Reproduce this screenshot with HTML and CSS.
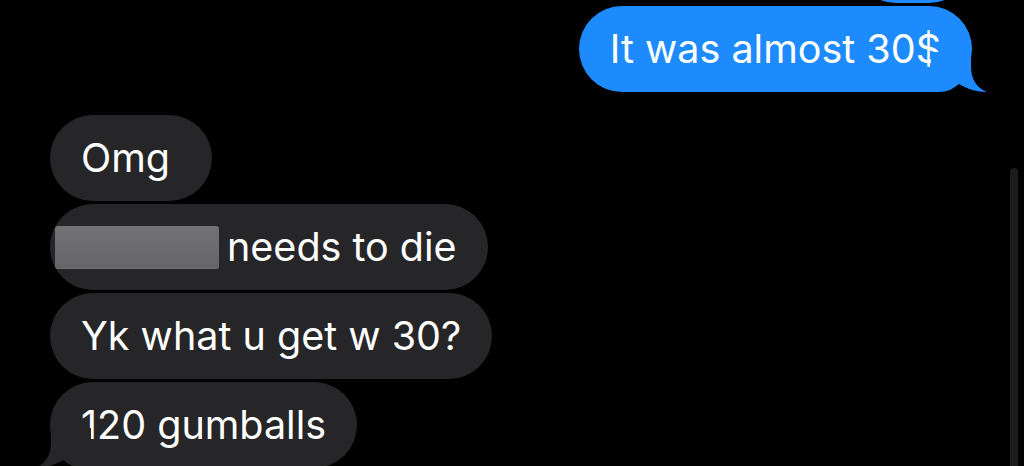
FILE: index.html
```html
<!DOCTYPE html>
<html lang="en">
<head>
<meta charset="utf-8">
<title>Messages</title>
<link rel="stylesheet" href="styles.css">
</head>
<body>
<div class="screen">
  <div class="thread">
    <div class="row row-out">
      <div class="bubble out prev"></div>
    </div>
    <div class="row row-out">
      <div class="bubble out has-tail">It was almost 30$
        <svg class="tail tail-out" viewBox="0 0 56 40" width="56" height="40" aria-hidden="true"><path d="M40 0 L40 14 C40 28 46 36 56 40 C46 40 36 37 28 32 C22 37 16 40 8 40 L0 40 L0 0 Z"/></svg>
      </div>
    </div>
    <div class="group-in">
      <div class="bubble in">Omg</div>
      <div class="bubble in"><span class="redact"></span>needs to die</div>
      <div class="bubble in">Yk what u get w 30?</div>
      <div class="bubble in has-tail">120 gumballs
        <svg class="tail tail-in" viewBox="0 0 56 40" width="56" height="40" aria-hidden="true"><path d="M40 0 L40 14 C40 28 46 36 56 40 C46 40 36 37 28 32 C22 37 16 40 8 40 L0 40 L0 0 Z"/></svg>
      </div>
    </div>
  </div>
  <div class="scrollbar"></div>
</div>
</body>
</html>
```
FILE: styles.css
```css
html, body {
  margin: 0;
  padding: 0;
  background: #000;
}
.screen {
  position: relative;
  width: 1024px;
  height: 466px;
  overflow: hidden;
  background: #000;
  font-family: Inter, "Noto Sans", sans-serif;
  color: #fff;
}
.thread {
  display: flex;
  flex-direction: column;
  gap: 3px;
  padding: 0 52px 0 50px;
}
.row {
  display: flex;
}
.row-out {
  justify-content: flex-end;
}
.bubble {
  position: relative;
  display: flex;
  align-items: center;
  box-sizing: border-box;
  min-width: 162px;
  height: 86px;
  padding: 0 31px;
  border-radius: 43px;
  font-size: 39.5px;
  letter-spacing: 0;
  white-space: nowrap;
}
.out {
  background: #1d8bfd;
  fill: #1d8bfd;
}
.in {
  background: #262628;
  fill: #262628;
}
.prev {
  width: 119px;
  min-width: 0;
  margin-top: -83px;
}
.group-in {
  display: flex;
  flex-direction: column;
  align-items: flex-start;
  gap: 3px;
  margin-top: 20px;
}
.tail {
  position: absolute;
  bottom: 0;
  display: block;
}
.tail-out {
  right: -15px;
}
.tail-in {
  left: -15px;
  transform: scaleX(-1);
}
.redact {
  display: inline-block;
  width: 164px;
  height: 43px;
  margin-left: -26px;
  margin-right: 8px;
  border-radius: 3px;
  background: linear-gradient(180deg, #727274 0%, #6b6b6d 60%, #656568 100%);
  box-shadow: inset 0 -1px 0 rgba(120, 120, 160, 0.4);
}
.scrollbar {
  position: absolute;
  right: 6px;
  top: 168px;
  width: 8px;
  height: 320px;
  border-radius: 4px;
  background: #1c1c1d;
}
```
